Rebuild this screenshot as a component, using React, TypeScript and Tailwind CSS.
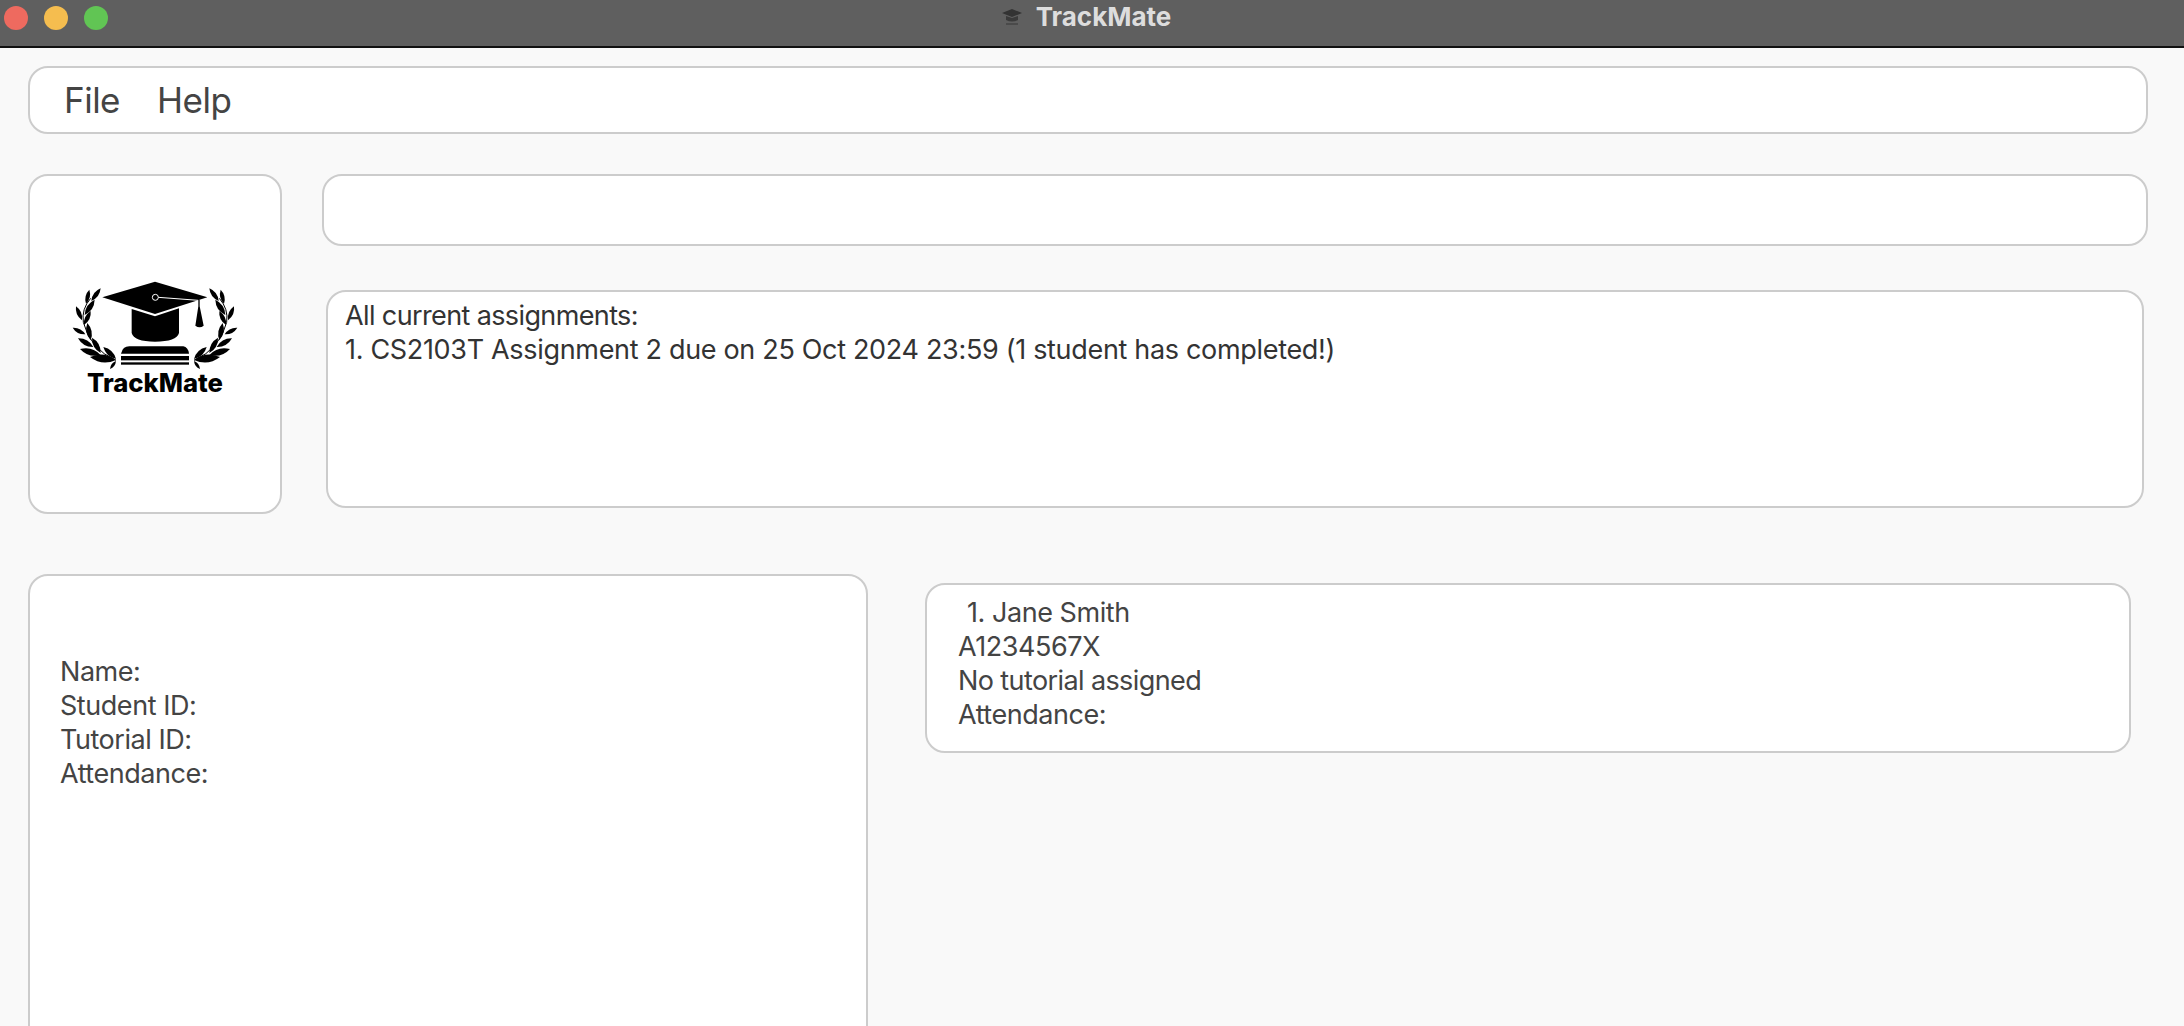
const LEAVES = [
  [124, 126, 152, 88],
  [108, 134, 118, 92],
  [104, 168, 134, 122],
  [96, 184, 78, 142],
  [102, 198, 122, 156],
  [106, 226, 68, 206],
  [122, 244, 112, 192],
  [130, 264, 84, 238],
  [152, 282, 126, 236],
  [152, 288, 90, 270],
  [198, 300, 160, 264],
  [198, 303, 120, 294],
  [198, 306, 180, 330],
];

function Leaf({ leaf }: { leaf: number[] }) {
  const [x1, y1, x2, y2] = leaf;
  const mx = (x1 + x2) / 2;
  const my = (y1 + y2) / 2;
  const dx = (y2 - y1) * 0.3;
  const dy = (x1 - x2) * 0.3;
  return (
    <path
      d={`M${x1} ${y1}Q${mx + dx} ${my + dy} ${x2} ${y2}Q${mx - dx} ${my - dy} ${x1} ${y1}Z`}
    />
  );
}

function Branch() {
  return (
    <>
      <path
        d="M198 304Q120 270 100 190Q94 150 122 118"
        fill="none"
        stroke="#000"
        strokeWidth="3"
      />
      {LEAVES.map((leaf, i) => (
        <Leaf key={i} leaf={leaf} />
      ))}
    </>
  );
}

function Logo() {
  return (
    <svg width="210" height="150" viewBox="0 0 630 450" className="mb-[20px] block">
      <g fill="#000">
        <Branch />
        <g transform="translate(630 0) scale(-1 1)">
          <Branch />
        </g>
        {/* cap */}
        <path d="M157 115L315 68L472 115L315 165Z" />
        <path d="M245 150L315 172L387 148V222Q380 248 315 248Q252 248 245 222Z" />
        <circle cx="316" cy="115" r="9" fill="#000" stroke="#fff" strokeWidth="3" />
        <path d="M325 115L445 124" stroke="#fff" strokeWidth="3" />
        <path d="M445 122H449V142L461 200Q449 210 436 200L445 142Z" />
        {/* book */}
        <path d="M213 284Q218 262 238 262H400Q414 264 417 284Z" />
        <rect x="213" y="291" width="204" height="13" />
        <rect x="213" y="310" width="204" height="7" />
        <text
          x="315"
          y="398"
          textAnchor="middle"
          fontFamily="Inter, sans-serif"
          fontWeight="800"
          fontSize="77"
        >
          TrackMate
        </text>
      </g>
    </svg>
  );
}

export default function App() {
  return (
    <div className="w-[2184px] h-[1026px] overflow-hidden bg-[#f9f9f9] font-['Inter',sans-serif] text-[#444444]">
      {/* Title bar */}
      <div className="relative flex h-[48px] items-center justify-center border-b-2 border-[#111111] bg-[#5f5f5f] pb-[12px]">
        <div className="absolute left-[4px] top-[6px] flex gap-[16px]">
          <span className="h-[24px] w-[24px] rounded-full bg-[#ee6a5f]" />
          <span className="h-[24px] w-[24px] rounded-full bg-[#f5bd4f]" />
          <span className="h-[24px] w-[24px] rounded-full bg-[#61c554]" />
        </div>
        <svg width="22" height="18" viewBox="0 0 22 18" className="mr-[13px]">
          <path d="M1 5L11 1L21 5L11 9Z" fill="#333333" />
          <path d="M5 8L11 10L17 8V12Q11 15 5 12Z" fill="#3a3a3a" />
          <rect x="5" y="15" width="12" height="2" fill="#4a4a4a" />
        </svg>
        <span className="mr-[12px] text-[26px] leading-[32px] font-bold text-[#dddddd]">TrackMate</span>
      </div>

      {/* Menu */}
      <div className="ml-[28px] mt-[18px] flex h-[68px] w-[2120px] items-center gap-[37px] rounded-[20px] border-2 border-[#cccccc] bg-white pl-[34px] text-[35px] leading-[44px] tracking-[-0.5px]">
        <span>File</span>
        <span>Help</span>
      </div>

      <div className="ml-[28px] mt-[40px] flex items-start">
        {/* Logo panel */}
        <div className="flex h-[340px] w-[254px] items-center justify-center rounded-[20px] border-2 border-[#cccccc] bg-white">
          <Logo />
        </div>
        <div className="ml-[40px]">
          {/* Command box */}
          <div className="h-[72px] w-[1826px] rounded-[20px] border-2 border-[#cccccc] bg-white" />
          {/* Result box */}
          <div className="ml-[4px] mt-[44px] h-[218px] w-[1818px] rounded-[20px] border-2 border-[#cccccc] bg-white pl-[17px] pt-[7px] text-[27px] leading-[34px] text-[#333333]">
            <div className="tracking-[-0.62px]">All current assignments:</div>
            <div className="tracking-[-0.32px]">1. CS2103T Assignment 2 due on 25 Oct 2024 23:59 (1 student has completed!)</div>
          </div>
        </div>
      </div>

      <div className="ml-[28px] mt-[60px] flex items-start">
        {/* Student details */}
        <div className="h-[600px] w-[840px] rounded-[20px] border-2 border-[#cccccc] bg-white pl-[30px] pt-[79px] text-[27px] leading-[34px] tracking-[-0.45px]">
          <div>Name:</div>
          <div>Student ID:</div>
          <div>Tutorial ID:</div>
          <div>Attendance:</div>
        </div>
        {/* Student list */}
        <div className="ml-[57px] mt-[9px] h-[170px] w-[1206px] rounded-[20px] border-2 border-[#cccccc] bg-white pl-[31px] pt-[11px] text-[27px] leading-[34px] tracking-[-0.45px]">
          <div className="pl-[9px]">1. Jane Smith</div>
          <div>A1234567X</div>
          <div className="tracking-[-0.6px]">No tutorial assigned</div>
          <div>Attendance:</div>
        </div>
      </div>
    </div>
  );
}
